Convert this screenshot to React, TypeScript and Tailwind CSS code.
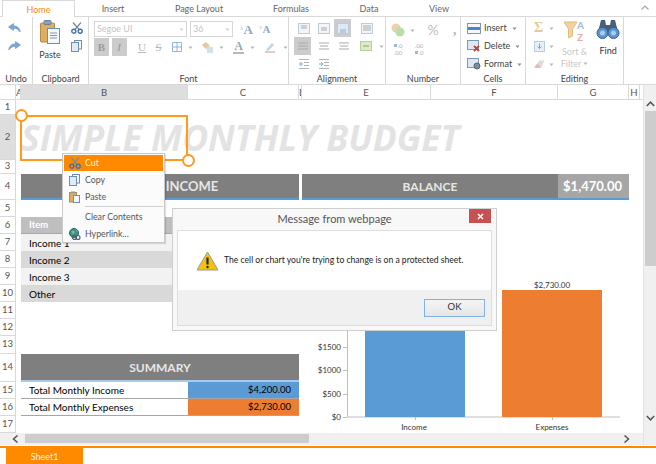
import type { ReactNode } from "react";

const tabs = [
  { label: "Insert", width: "w-[76px]" },
  { label: "Page Layout", width: "w-[96px]" },
  { label: "Formulas", width: "w-[88px]" },
  { label: "Data", width: "w-[68px]" },
  { label: "View", width: "w-[72px]" },
];

const columns = [
  { label: "A", selected: false },
  { label: "B", selected: true },
  { label: "C", selected: false },
  { label: "D", selected: false },
  { label: "E", selected: false },
  { label: "F", selected: false },
  { label: "G", selected: false },
  { label: "H", selected: false },
];

const rowNumbers = [1, 2, 3, 4, 5, 6, 7, 8, 9, 10, 11, 12, 13, 14, 15, 16, 17];

const sheetColumns = "grid-cols-[16px_5px_167px_111px_3px_129px_127px_71px_11px_3px]";

function Svg({ w, h, children, className }: { w: number; h: number; children: ReactNode; className?: string }) {
  return (
    <svg width={w} height={h} viewBox={`0 0 ${w} ${h}`} className={className ?? "shrink-0"} fill="none">
      {children}
    </svg>
  );
}

function Caret({ color = "#b5b5b5" }: { color?: string }) {
  return (
    <Svg w={5} h={3}>
      <path d="M0.5 0.5h4L2.5 3z" fill={color} />
    </Svg>
  );
}

function UndoIcon({ flip }: { flip?: boolean }) {
  return (
    <svg width="13" height="10" viewBox="0 0 13 10" className={flip ? "-scale-x-100" : ""} fill="none">
      <path d="M5.5 0.5L0.5 4l5 3.5V5.3c2.5 0 4.6 0.8 6.8 3.7-0.4-3.8-2.9-6-6.8-6.3z" fill="#7ba7d7" stroke="#5f8fc4" strokeWidth="0.6" />
    </svg>
  );
}

function PasteIcon() {
  return (
    <Svg w={20} h={24}>
      <rect x="0.5" y="3" width="14" height="19" rx="1" fill="#dcae62" stroke="#b58a44" />
      <rect x="4" y="0.5" width="7" height="4" rx="1" fill="#8ea0b4" stroke="#6d7f94" />
      <rect x="7.5" y="8.5" width="12" height="15" fill="#f4f7fb" stroke="#6b8fb8" />
      <path d="M10 13h7M10 15.5h7M10 18h7" stroke="#8a97a6" />
    </Svg>
  );
}

function ScissorsIcon({ size = 12 }: { size?: number }) {
  return (
    <svg width={size} height={size} viewBox="0 0 12 12" className="shrink-0" fill="none">
      <path d="M2 0.5L8.5 8M10 0.5L3.5 8" stroke="#7f8a96" strokeWidth="1.3" />
      <circle cx="2.8" cy="9.2" r="2" stroke="#3f72ad" strokeWidth="1.4" />
      <circle cx="9.2" cy="9.2" r="2" stroke="#3f72ad" strokeWidth="1.4" />
    </svg>
  );
}

function CopyIcon() {
  return (
    <Svg w={11} h={12}>
      <rect x="3.5" y="0.5" width="7" height="8.5" fill="#f4f7fb" stroke="#6b8fb8" />
      <rect x="0.5" y="2.5" width="7" height="9" fill="#e3ebf5" stroke="#6b8fb8" />
    </Svg>
  );
}

function SmallPasteIcon() {
  return (
    <Svg w={11} h={12}>
      <rect x="0.5" y="1.5" width="7" height="9.5" fill="#dcae62" stroke="#b58a44" />
      <rect x="2" y="0.5" width="4" height="2" fill="#8ea0b4" />
      <rect x="4.5" y="4.5" width="6" height="7" fill="#f4f7fb" stroke="#6b8fb8" />
    </Svg>
  );
}

function GlobeIcon() {
  return (
    <Svg w={12} h={12}>
      <circle cx="5" cy="5" r="4.5" fill="#3f8f8a" stroke="#2f5f86" />
      <path d="M2 3.5l3-1 1 2-2 2zM6.5 1.5l2 1.5-1 1z" fill="#7cc06a" />
      <circle cx="5.5" cy="9.5" r="2" fill="none" stroke="#4a5a70" strokeWidth="1.2" />
      <circle cx="9" cy="9.5" r="2" fill="none" stroke="#4a5a70" strokeWidth="1.2" />
    </Svg>
  );
}

function LinesIcon({ rows, box, tint }: { rows: [number, number][]; box?: boolean; tint?: boolean }) {
  return (
    <Svg w={12} h={11}>
      {box && <rect x="0.5" y="0.5" width="11" height="10" fill={tint ? "#dce8f4" : "#f2f6fa"} stroke="#b6cde3" />}
      {rows.map(([x, y], i) => (
        <path key={i} d={`M${x} ${y}h${12 - 2 * x}`} stroke={tint ? "#8fb0d0" : "#a9a9a9"} />
      ))}
    </Svg>
  );
}

function IndentIcon({ flip }: { flip?: boolean }) {
  return (
    <Svg w={12} h={10}>
      <path d="M1 0.5h10M6 3.5h5M6 6.5h5M1 9.5h10" stroke="#b5b5b5" />
      <path d={flip ? "M1 5h3M3 3l2 2-2 2" : "M5 5H2M3.5 3L1.5 5l2 2"} stroke="#7aa7d4" />
    </Svg>
  );
}

function DecimalIcon({ more }: { more?: boolean }) {
  return (
    <div className="flex w-[12px] flex-col items-center text-[6px] leading-[7px] text-[#b0b0b0]">
      <span className="flex items-center gap-px">
        {more && <span className="h-[3px] w-[3px] bg-[#9dbbd9]" />}
        {more ? ".0" : ".00"}
      </span>
      <span className="flex items-center gap-px">
        {!more && <span className="h-[3px] w-[3px] bg-[#9dbbd9]" />}
        {more ? ".00" : ".0"}
      </span>
    </div>
  );
}

function FontGroup() {
  return (
    <div className="flex h-full flex-col pl-[5px] pt-1">
      <div className="flex shrink-0 items-center">
        <div className="flex h-[16px] w-[93px] items-center justify-between border border-[#d6d6d6] px-[2px] text-[9px] text-[#c4c4c4]">
          Segoe UI
          <Caret color="#d0d0d0" />
        </div>
        <div className="ml-[3px] flex h-[16px] w-[43px] items-center justify-between border border-[#d6d6d6] px-[2px] text-[9px] text-[#c4c4c4]">
          36
          <Caret color="#d0d0d0" />
        </div>
        <span className="ml-[7px] w-[19px] font-['Liberation_Serif',serif] text-[13px] leading-none font-bold text-[#8fa9c4]">
          <sup className="text-[6px]">^</sup>A
        </span>
        <span className="font-['Liberation_Serif',serif] text-[11px] leading-none font-bold text-[#8fa9c4]">
          <sup className="text-[6px]">˅</sup>A
        </span>
      </div>
      <div className="mt-[1px] flex h-[18px] shrink-0 items-center font-['Liberation_Serif',serif] text-[11px] text-[#9a9a9a]">
        <div className="flex h-[18px] w-[17px] items-center justify-center bg-[#cccccc] font-bold">B</div>
        <div className="ml-[3px] flex h-[18px] w-[17px] items-center justify-center bg-[#cccccc] italic">I</div>
        <span className="ml-[8px] w-[17px] text-center text-[#b8b8b8] underline">U</span>
        <span className="ml-[2px] w-[17px] text-center text-[#b8b8b8] line-through">S</span>
        <Svg w={10} h={10} className="ml-[6px] shrink-0">
          <path d="M0.5 0.5h9v9h-9zM5 0.5v9M0.5 5h9" stroke="#8fb3d9" />
        </Svg>
        <span className="ml-[6px]"><Caret /></span>
        <Svg w={12} h={12} className="ml-[8px] shrink-0">
          <path d="M1 4l4-3 4 4-4 3z" fill="#e2c9a0" />
          <path d="M6 6h6v6H6z" fill="#cfe0ef" />
        </Svg>
        <span className="ml-[6px]"><Caret /></span>
        <div className="ml-[9px] flex w-[12px] flex-col items-center">
          <span className="text-[12px] leading-[11px] font-bold text-[#8fa9c4]">A</span>
          <span className="h-[2px] w-[11px] bg-[#b8b8b8]" />
        </div>
        <span className="ml-[6px]"><Caret /></span>
        <Svg w={12} h={12} className="ml-[9px] shrink-0">
          <path d="M2 9l6-7 2 2-6 6z" fill="#bdd3e8" />
          <path d="M1 11h10" stroke="#e7c9c9" strokeWidth="2" />
        </Svg>
        <span className="ml-[7px]"><Caret /></span>
      </div>
    </div>
  );
}

function AlignmentGroup() {
  const cell = "flex w-[20px] items-center justify-center";
  return (
    <div className="flex h-full flex-col pl-[5px] pt-[2px]">
      <div className="flex h-[18px] shrink-0">
        <div className={cell}><LinesIcon box rows={[[3, 3], [3, 5]]} /></div>
        <div className={cell}><LinesIcon box rows={[[3, 5], [3, 7]]} /></div>
        <div className="flex w-[17px] items-center justify-center bg-[#cccccc]"><LinesIcon box tint rows={[[3, 7], [3, 9]]} /></div>
        <div className="ml-[6px] flex w-[20px] items-center justify-center"><LinesIcon box rows={[[2, 3], [2, 5], [2, 7]]} /></div>
      </div>
      <div className="flex h-[18px] shrink-0">
        <div className="flex w-[17px] items-center justify-center bg-[#cccccc]"><LinesIcon rows={[[1, 2], [1, 5], [1, 8]]} /></div>
        <div className="ml-[3px] flex w-[20px] items-center justify-center"><LinesIcon rows={[[1, 2], [2, 5], [1, 8]]} /></div>
        <div className={cell}><LinesIcon rows={[[1, 2], [2, 5], [1, 8]]} /></div>
        <div className="ml-[2px] flex items-center gap-[7px] pl-[4px]">
          <Svg w={12} h={10}>
            <rect x="0.5" y="0.5" width="11" height="9" fill="#dcebc8" stroke="#b8cf9c" />
            <path d="M3 5h6" stroke="#8aa866" />
          </Svg>
          <Caret />
        </div>
      </div>
      <div className="flex h-[17px] shrink-0">
        <div className={cell}><IndentIcon /></div>
        <div className={cell}><IndentIcon flip /></div>
      </div>
    </div>
  );
}

function NumberGroup() {
  return (
    <div className="flex h-full flex-col pl-[5px] pt-[3px]">
      <div className="flex h-[20px] shrink-0 items-center">
        <Svg w={14} h={14}>
          <circle cx="5" cy="5" r="4.5" fill="#e8d3ae" />
          <circle cx="9" cy="9" r="4.5" fill="#bcdca8" />
        </Svg>
        <span className="ml-[5px]"><Caret /></span>
        <span className="ml-[6px] w-[24px] text-center text-[14px] leading-none text-[#bdbdbd]">%</span>
        <span className="ml-[8px] font-['Liberation_Serif',serif] text-[14px] leading-none font-bold text-[#b5b5b5]">,</span>
      </div>
      <div className="mt-[1px] flex h-[16px] shrink-0 items-center gap-[9px] pl-[1px]">
        <DecimalIcon more />
        <DecimalIcon />
      </div>
    </div>
  );
}

function CellsRow({ icon, label }: { icon: ReactNode; label: string }) {
  return (
    <div className="flex h-[18px] shrink-0 items-center text-[9px] text-[#444444]">
      <span className="flex w-[16px] justify-center">{icon}</span>
      <span className="ml-[2px] mr-[5px]">{label}</span>
      <Caret color="#8a8a8a" />
    </div>
  );
}

function CellsGroup() {
  return (
    <div className="flex h-full flex-col pl-[5px] pt-[2px]">
      <CellsRow
        label="Insert"
        icon={
          <Svg w={14} h={11}>
            <rect x="0.5" y="0.5" width="13" height="10" fill="#f4f7fb" stroke="#7d97b5" />
            <rect x="1" y="4" width="12" height="3" fill="#4a85c5" />
          </Svg>
        }
      />
      <CellsRow
        label="Delete"
        icon={
          <Svg w={14} h={12}>
            <rect x="0.5" y="0.5" width="11" height="9" fill="#dde8f3" stroke="#7d97b5" />
            <path d="M7 6l5 5M12 6l-5 5" stroke="#d23b2f" strokeWidth="1.8" />
          </Svg>
        }
      />
      <CellsRow
        label="Format"
        icon={
          <Svg w={14} h={12}>
            <rect x="0.5" y="0.5" width="11" height="9" fill="#dde8f3" stroke="#7d97b5" />
            <circle cx="10" cy="8" r="3" fill="#7d8da0" stroke="#566575" />
          </Svg>
        }
      />
    </div>
  );
}

function EditingGroup() {
  return (
    <div className="flex h-full">
      <div className="flex w-[30px] flex-col pl-[8px] pt-[2px]">
        <div className="flex h-[18px] shrink-0 items-center gap-[4px]">
          <span className="font-['Liberation_Serif',serif] w-[11px] text-[14px] leading-none font-bold text-[#e6c89a]">Σ</span>
          <Caret />
        </div>
        <div className="flex h-[18px] shrink-0 items-center gap-[4px]">
          <Svg w={11} h={11}>
            <rect x="0.5" y="0.5" width="10" height="10" fill="#e6eff8" stroke="#b6cde3" />
            <path d="M5.5 2.5v5M3.5 5.5l2 2 2-2" stroke="#7aa7d4" />
          </Svg>
          <Caret />
        </div>
        <div className="flex h-[18px] shrink-0 items-center gap-[4px]">
          <Svg w={11} h={9}>
            <path d="M0.5 7l5-6.5h5L7 8H2z" fill="#dcdcdc" />
            <path d="M0.5 7l3-3.5 3 3L4.5 8H2z" fill="#eeb7b7" />
          </Svg>
          <Caret />
        </div>
      </div>
      <div className="flex w-[38px] flex-col items-center pt-[2px] text-[9px] leading-[11px] text-[#c8c8c8]">
        <Svg w={23} h={24}>
          <path d="M1 3h13L9.5 10v7l-4 2V10z" fill="#efd3a0" stroke="#e2bb7c" />
          <text x="14" y="10" fontSize="10" fontWeight="700" fill="#9dbbd9" fontFamily="Lato,sans-serif">A</text>
          <text x="14" y="22" fontSize="10" fontWeight="700" fill="#e8aaaa" fontFamily="Lato,sans-serif">Z</text>
        </Svg>
        <span className="mt-[3px]">Sort &amp;</span>
        <span className="mt-[1px] flex items-center gap-[2px]">Filter<Caret /></span>
      </div>
      <div className="flex w-[30px] flex-col items-center pt-[2px] text-[9px] text-[#333333]">
        <Svg w={24} h={21}>
          <path d="M5 1h4l1 5h4l1-5h4l3 12H2z" fill="#4a5f7a" />
          <circle cx="6.5" cy="14" r="5.5" fill="#5a94d4" stroke="#3a5f8c" />
          <circle cx="17.5" cy="14" r="5.5" fill="#5a94d4" stroke="#3a5f8c" />
          <circle cx="6.5" cy="14" r="2.5" fill="#a9cdf0" />
          <circle cx="17.5" cy="14" r="2.5" fill="#a9cdf0" />
        </Svg>
        <span className="mt-[4px] leading-[13px]">Find</span>
      </div>
    </div>
  );
}

function RibbonGroup({ label, width, children }: { label: string; width: string; children: ReactNode }) {
  return (
    <div className={`flex flex-col border-r border-[#d9d9d9] ${width}`}>
      <div className="min-h-0 flex-1">{children}</div>
      <div className="h-[14px] text-center text-[9px] leading-[17px] text-[#444444]">{label}</div>
    </div>
  );
}

function Ribbon() {
  return (
    <>
      <div className="relative flex h-[16px] pl-[2px] text-[9px] text-[#666666]">
        <div className="relative z-10 flex h-[17px] w-[73px] items-center justify-center border-x border-t border-[#d9d9d9] bg-white pt-[2px] text-[#ff8a00]">
          Home
        </div>
        {tabs.map((tab) => (
          <div key={tab.label} className={`flex items-center justify-center pt-[2px] ${tab.width}`}>
            {tab.label}
          </div>
        ))}
        <Svg w={8} h={5} className="absolute left-[641px] top-[5px]">
          <path d="M0.5 4.5L4 1l3.5 3.5" stroke="#a8a8a8" strokeWidth="1.2" />
        </Svg>
      </div>
      <div className="flex h-[69px] border-y border-[#d9d9d9]">
        <RibbonGroup label="Undo" width="w-[33px]">
          <div className="flex flex-col items-center gap-[8px] pt-[6px] pr-[4px]">
            <UndoIcon />
            <UndoIcon flip />
          </div>
        </RibbonGroup>
        <RibbonGroup label="Clipboard" width="w-[56px]">
          <div className="flex pl-[5px] pt-[3px]">
            <div className="flex w-[24px] flex-col items-center text-[9px] text-[#444444]">
              <PasteIcon />
              <span className="mt-[4px]">Paste</span>
            </div>
            <div className="ml-[9px] flex flex-col gap-[6px] pt-[2px]">
              <ScissorsIcon />
              <CopyIcon />
            </div>
          </div>
        </RibbonGroup>
        <RibbonGroup label="Font" width="w-[200px]"><FontGroup /></RibbonGroup>
        <RibbonGroup label="Alignment" width="w-[97px]"><AlignmentGroup /></RibbonGroup>
        <RibbonGroup label="Number" width="w-[75px]"><NumberGroup /></RibbonGroup>
        <RibbonGroup label="Cells" width="w-[65px]"><CellsGroup /></RibbonGroup>
        <RibbonGroup label="Editing" width="w-[98px]"><EditingGroup /></RibbonGroup>
      </div>
    </>
  );
}

function ColumnHeaders() {
  return (
    <div className={`grid h-[15px] border-b border-[#d9d9d9] text-[9.5px] leading-[16px] text-[#555555] ${sheetColumns}`}>
      <div className="border-r border-[#d9d9d9]" />
      {columns.map((col) => (
        <div
          key={col.label}
          className={`overflow-hidden border-r border-[#d9d9d9] text-center ${col.selected ? "bg-[#dedede]" : ""}`}
        >
          {col.label}
        </div>
      ))}
    </div>
  );
}

function Chart() {
  const ticks = [
    { label: "$1500", y: 130 },
    { label: "$1000", y: 153 },
    { label: "$500", y: 177 },
    { label: "$0", y: 200 },
  ];
  return (
    <svg width="327" height="216" viewBox="0 0 327 216" className="col-start-6 col-end-10 row-start-6 row-end-18" fontFamily="Lato,sans-serif" fontSize="8" fill="#333333">
      <path d="M45.5 0V200M45 200H318" stroke="#bdbdbd" />
      {ticks.map((t) => (
        <g key={t.label}>
          <path d={`M41 ${t.y}.5h4`} stroke="#bdbdbd" />
          <text x="39" y={t.y + 3} textAnchor="end">{t.label}</text>
        </g>
      ))}
      <rect x="63" y="5" width="100" height="195" fill="#5b9bd5" />
      <rect x="200" y="73" width="100" height="127" fill="#ed7d31" />
      <text x="250" y="71" textAnchor="middle">$2,730.00</text>
      <path d="M113.5 200v3M250.5 200v3" stroke="#bdbdbd" />
      <text x="112" y="213" textAnchor="middle">Income</text>
      <text x="250" y="213" textAnchor="middle">Expenses</text>
    </svg>
  );
}

function Sheet() {
  const band = "flex items-center pl-[8px] pt-px text-[10px] text-black";
  const header = "flex items-center justify-center border-b-2 bg-[#7f7f7f] pt-[2px] font-bold text-[#e6e6e6]";
  return (
    <div className={`grid h-[333px] overflow-hidden grid-rows-[15px_45px_14px_26px_17px_17px_17px_17px_17px_17px_17px_17px_18px_28px_17px_17px_17px] ${sheetColumns}`}>
      <div className="col-start-1 row-span-full grid grid-rows-subgrid text-center text-[9.5px] text-[#555555]">
        {rowNumbers.map((n) => (
          <div
            key={n}
            className={`flex items-center justify-center border-r border-b border-[#d9d9d9] ${n === 2 ? "bg-[#dedede]" : ""}`}
          >
            {n}
          </div>
        ))}
      </div>

      {/* title + selected picture */}
      <div className="relative col-start-3 col-end-4 row-start-2 flex items-center whitespace-nowrap font-['Open_Sans',sans-serif] text-[35.5px] font-bold text-[#e3e3e3] italic">
        SIMPLE MONTHLY BUDGET
        <div className="absolute -left-px top-0 h-[46px] w-[168px] border-2 border-[#ff9a1f]" />
        <div className="absolute -left-[6px] -top-[6px] size-[13px] rounded-full border-2 border-[#ff9a1f] bg-white" />
        <div className="absolute -right-[7px] -bottom-[7px] size-[13px] rounded-full border-2 border-[#ff9a1f] bg-white" />
      </div>

      {/* income / balance headers */}
      <div className={`col-start-3 col-end-5 row-start-4 border-[#5b9bd5] pl-[64px] text-[13px] ${header}`}>INCOME</div>
      <div className={`col-start-6 col-end-8 row-start-4 border-[#5b9bd5] text-[12px] ${header}`}>BALANCE</div>
      <div className="col-start-8 row-start-4 flex items-center justify-end border-b-2 border-[#5b9bd5] bg-[#a6a6a6] pt-px pr-[7px] text-[13px] font-bold text-white">
        $1,470.00
      </div>

      {/* income table */}
      <div className="col-start-3 col-end-5 row-start-6 flex items-center border-b border-[#a6a6a6] bg-[#bfbfbf] pl-[8px] text-[9.5px] font-bold text-white">Item</div>
      <div className={`col-start-3 col-end-5 row-start-7 bg-[#f2f2f2] ${band}`}>Income 1</div>
      <div className={`col-start-3 col-end-5 row-start-8 bg-[#d9d9d9] ${band}`}>Income 2</div>
      <div className={`col-start-3 col-end-5 row-start-9 bg-[#f2f2f2] ${band}`}>Income 3</div>
      <div className={`col-start-3 col-end-5 row-start-10 bg-[#d9d9d9] ${band}`}>Other</div>

      {/* summary */}
      <div className={`col-start-3 col-end-5 row-start-14 border-[#a9cbe8] text-[12px] ${header}`}>SUMMARY</div>
      <div className={`col-start-3 row-start-15 border-b border-[#a6a6a6] ${band}`}>Total Monthly Income</div>
      <div className="col-start-4 row-start-15 flex items-center justify-end border-b border-[#a6a6a6] bg-[#5b9bd5] pr-[8px] text-[9.5px] text-black">$4,200.00</div>
      <div className={`col-start-3 row-start-16 border-b border-[#a6a6a6] ${band}`}>Total Monthly Expenses</div>
      <div className="col-start-4 row-start-16 flex items-center justify-end border-b border-[#a6a6a6] bg-[#ed7d31] pr-[8px] text-[9.5px] text-black">$2,730.00</div>

      <Chart />
    </div>
  );
}

function MenuItem({ icon, label, active }: { icon?: ReactNode; label: string; active?: boolean }) {
  return (
    <div className={`flex shrink-0 items-center ${active ? "h-[16px] bg-[#ff8a00] text-[#fff1e0]" : "h-[17px] text-[#555555]"}`}>
      <span className="flex w-[21px] justify-center">{icon}</span>
      {label}
    </div>
  );
}

function ContextMenu() {
  return (
    <div className="absolute left-[62px] top-[153px] z-20 flex h-[90px] w-[103px] flex-col border border-[#c8c8c8] bg-[#fbfbfb] p-[1px] text-[8.8px] shadow-[1px_1px_1px_rgba(0,0,0,0.12)]">
      <MenuItem active label="Cut" icon={<ScissorsIcon />} />
      <MenuItem label="Copy" icon={<CopyIcon />} />
      <MenuItem label="Paste" icon={<SmallPasteIcon />} />
      <div className="my-[1px] ml-[21px] h-px shrink-0 bg-[#cfcfcf]" />
      <MenuItem label="Clear Contents" />
      <MenuItem label="Hyperlink..." icon={<GlobeIcon />} />
    </div>
  );
}

function MessageDialog() {
  return (
    <div className="absolute left-[172px] top-[208px] z-30 flex h-[123px] w-[325px] flex-col border border-[#cfcfcf] bg-[#f8f8f8] px-[4px] pb-[4px]">
      <div className="relative flex h-[21px] shrink-0 items-center justify-center text-[11px] text-[#555555]">
        Message from webpage
        <div className="absolute right-[1px] top-0 flex h-[14px] w-[22px] items-center justify-center bg-[#c75050]">
          <Svg w={7} h={7}>
            <path d="M1 1l5 5M6 1L1 6" stroke="white" strokeWidth="1.5" />
          </Svg>
        </div>
      </div>
      <div className="flex flex-1 flex-col border border-[#dedede] bg-white">
        <div className="flex h-[59px] items-center pl-[18px] text-[8.6px] text-[#222222]">
          <Svg w={23} h={20}>
            <path d="M11.5 1L22 19H1z" fill="#f4c20d" stroke="#9a9a9a" />
            <path d="M11.5 6.5v7" stroke="#222222" strokeWidth="2.2" />
            <circle cx="11.5" cy="16" r="1.2" fill="#222222" />
          </Svg>
          <span className="ml-[5px] whitespace-nowrap">The cell or chart you're trying to change is on a protected sheet.</span>
        </div>
        <div className="flex flex-1 items-center justify-end bg-[#f0f0f0] pr-[6px]">
          <div className="flex h-[18px] w-[61px] items-center justify-center border border-[#7eb4ea] bg-gradient-to-b from-[#f4f4f4] to-[#e6e6e6] text-[9.5px] text-[#333333]">
            OK
          </div>
        </div>
      </div>
    </div>
  );
}

export default function App() {
  return (
    <div className="relative flex h-[464px] w-[656px] flex-col overflow-hidden bg-white font-['Lato',sans-serif]">
      <Ribbon />
      <div className="flex h-[360px]">
        <div className="flex w-[643px] flex-col">
          <ColumnHeaders />
          <Sheet />
          {/* horizontal scrollbar */}
          <div className="flex h-[12px] items-center bg-[#f0f0f0] pt-px pb-[2px] pl-[12px]">
            <Svg w={7} h={8}>
              <path d="M5.5 0.5L1.5 4l4 3.5" stroke="#555555" strokeWidth="1.5" />
            </Svg>
            <div className="ml-[6px] h-full w-[284px] bg-[#cdcdcd]" />
            <Svg w={7} h={8} className="ml-[314px] shrink-0">
              <path d="M1.5 0.5L5.5 4l-4 3.5" stroke="#555555" strokeWidth="1.5" />
            </Svg>
          </div>
        </div>
        {/* vertical scrollbar */}
        <div className="flex w-[13px] flex-col items-center border-l border-[#e2e2e2] bg-[#f0f0f0] pt-[16px]">
          <Svg w={9} h={6}>
            <path d="M0.8 5L4.5 1.2 8.2 5" stroke="#555555" strokeWidth="1.5" />
          </Svg>
          <div className="mt-[4px] h-[155px] w-[11px] shrink-0 bg-[#cdcdcd]" />
          <Svg w={9} h={6} className="mt-[149px] shrink-0">
            <path d="M0.8 1L4.5 4.8 8.2 1" stroke="#555555" strokeWidth="1.5" />
          </Svg>
        </div>
      </div>
      {/* sheet tabs */}
      <div className="mt-[1px] h-[18px] border-t-2 border-[#ff8a00] pl-[6px]">
        <div className="flex h-[16px] w-[77px] items-center justify-center bg-[#ff8a00] pt-[2px] text-[9px] text-[#fff1e0]">
          Sheet1
        </div>
      </div>
      <ContextMenu />
      <MessageDialog />
    </div>
  );
}
